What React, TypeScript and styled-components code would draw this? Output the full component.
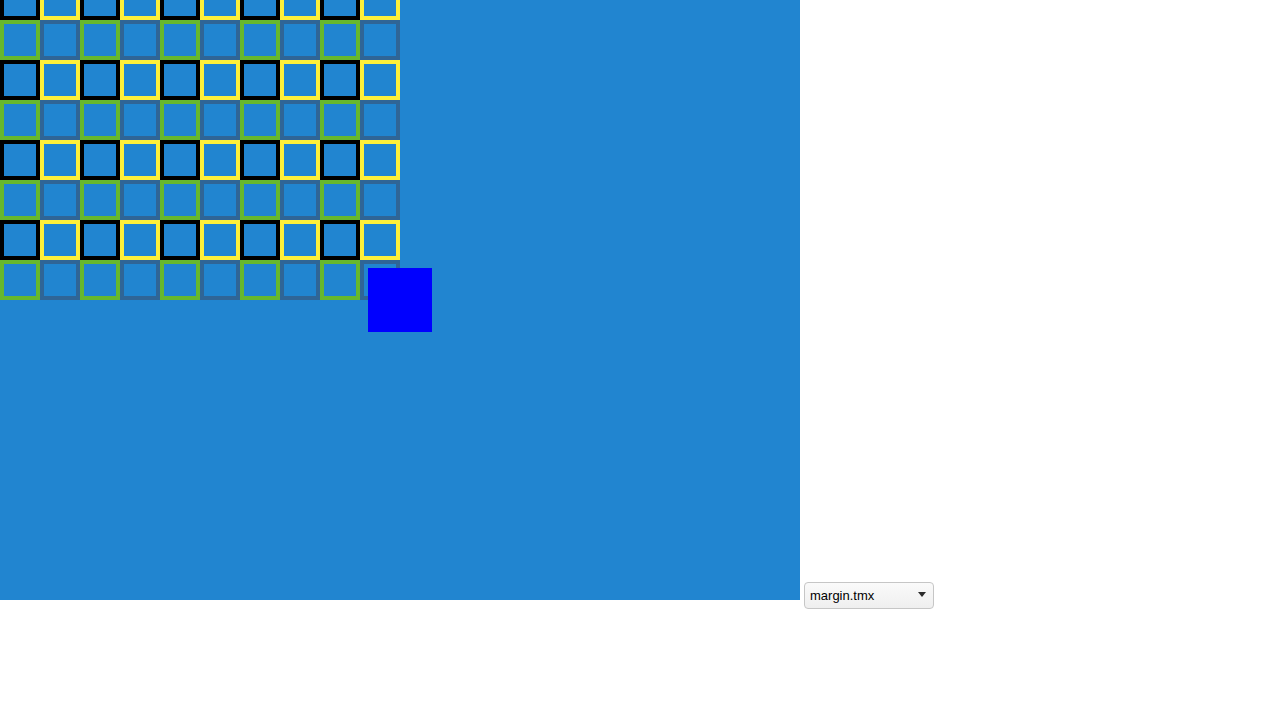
import React from "react";
import styled, { createGlobalStyle } from "styled-components";

const Global = createGlobalStyle`
  html, body { margin: 0; padding: 0; background: #ffffff; }
  body { font-family: "Liberation Sans", Arial, sans-serif; }
`;

const Page = styled.div`
  display: flex;
  align-items: baseline;
  gap: 4px;
`;

const MapCanvas = styled.svg`
  display: block;
  width: 800px;
  height: 600px;
  flex: none;
`;

const SelectWrap = styled.div`
  position: relative;
  display: inline-flex;
`;

const MapSelect = styled.select`
  appearance: none;
  -webkit-appearance: none;
  width: 130px;
  height: 27px;
  margin: 0;
  padding: 0 24px 0 5px;
  font-family: "Liberation Sans", Arial, sans-serif;
  font-size: 13px;
  color: #000;
  background: linear-gradient(#fafafa, #efefef);
  border: 1px solid #c6c6c6;
  border-radius: 4px;
  outline: none;
`;

const Arrow = styled.svg`
  position: absolute;
  right: 8px;
  top: 10px;
  width: 8px;
  height: 5px;
  pointer-events: none;
`;

const COLS = 10;
const ROWS = 8;
const T = 40;
const BW = 4;

function borderColor(r: number, c: number) {
  const even = r % 2 === 0;
  if (even) return c % 2 === 0 ? "#000000" : "#fdf03b";
  return c % 2 === 0 ? "#66b82e" : "#2f6597";
}

export default function App() {
  const tiles: React.ReactNode[] = [];
  for (let r = 0; r < ROWS; r++) {
    for (let c = 0; c < COLS; c++) {
      const x = c * T;
      const y = r * T - 20;
      tiles.push(
        <rect
          key={`${r}-${c}`}
          x={x + BW / 2}
          y={y + BW / 2}
          width={T - BW}
          height={T - BW}
          fill="#2185d0"
          stroke={borderColor(r, c)}
          strokeWidth={BW}
        />
      );
    }
  }
  return (
    <>
      <Global />
      <Page>
        <MapCanvas viewBox="0 0 800 600">
          <rect x={0} y={0} width={800} height={600} fill="#2185d0" />
          {tiles}
          <rect x={368} y={268} width={64} height={64} fill="#0000ff" />
        </MapCanvas>
        <SelectWrap>
          <MapSelect defaultValue="margin.tmx">
            <option value="margin.tmx">margin.tmx</option>
          </MapSelect>
          <Arrow viewBox="0 0 8 5">
            <path d="M0 0 L8 0 L4 5 Z" fill="#2b2b2b" />
          </Arrow>
        </SelectWrap>
      </Page>
    </>
  );
}
